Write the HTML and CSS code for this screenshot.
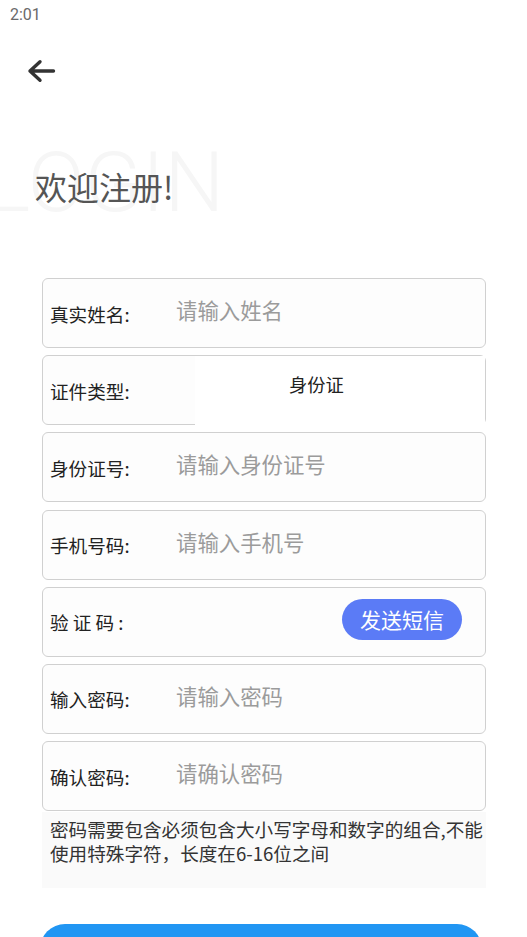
FILE: index.html
```html
<!DOCTYPE html>
<html>
<head>
    <title>注册</title>
    <meta charset="utf-8">
    <meta name="viewport" content="width=device-width, initial-scale=1">
    <link rel="stylesheet" href="styles.css">
</head>
<body>

<div class="status">2:01</div>

<div class="topbar">
    <svg class="back" width="30" height="26" viewBox="0 0 30 26">
        <path d="M3 13 H26.5 M13 3.7 L3 13 L13 22.3" fill="none" stroke="#333" stroke-width="3.4" stroke-linecap="round" stroke-linejoin="round"/>
    </svg>
</div>

<div class="hero">
    <div class="watermark">LOGIN</div>
    <div class="title">欢迎注册!</div>
</div>

<div class="form">
    <div class="field">
        <span class="label">真实姓名:</span>
        <input class="input" type="text" placeholder="请输入姓名">
    </div>

    <div class="field field-select">
        <span class="label">证件类型:</span>
        <div class="spinner">身份证</div>
    </div>

    <div class="field">
        <span class="label">身份证号:</span>
        <input class="input" type="text" placeholder="请输入身份证号">
    </div>

    <div class="field">
        <span class="label">手机号码:</span>
        <input class="input" type="text" placeholder="请输入手机号">
    </div>

    <div class="field">
        <span class="label">验 证 码 :</span>
        <a href="#" class="sms">发送短信</a>
    </div>

    <div class="field">
        <span class="label">输入密码:</span>
        <input class="input" type="password" placeholder="请输入密码">
    </div>

    <div class="field">
        <span class="label">确认密码:</span>
        <input class="input" type="password" placeholder="请确认密码">
    </div>
</div>

<div class="hint">密码需要包含必须包含大小写字母和数字的组合,不能<br>使用特殊字符，长度在6-16位之间</div>

<a href="#" class="submit">注册</a>

</body>
</html>
```

FILE: styles.css
```css
* {
  box-sizing: border-box;
}

body {
  margin: 0;
  padding: 0;
  background-color: #ffffff;
  font-family: "Noto Sans CJK SC", "Noto Sans", sans-serif;
  color: #222;
  overflow: hidden;
}

/* status bar */
.status {
  height: 30px;
  line-height: 30px;
  padding-left: 10px;
  font-family: Roboto, "Noto Sans", sans-serif;
  font-size: 16px;
  color: #6a6a6a;
}

.topbar {
  height: 54px;
  padding-top: 28px;
  padding-left: 27px;
}
.back {
  display: block;
}

/* big title with the faint LOGIN behind it */
.hero {
  position: relative;
  padding-top: 82px;
  padding-left: 35px;
}
.watermark {
  position: absolute;
  top: 57px;
  left: -14px;
  font-family: Roboto, sans-serif;
  font-weight: 300;
  font-size: 84px;
  line-height: 1;
  color: #f6f6f6;
  white-space: nowrap;
}
.title {
  position: relative;
  font-size: 32px;
  line-height: 41px;
  color: #555;
}

/* form rows */
.form {
  margin: 71px 41px 0 42px;
  display: flex;
  flex-direction: column;
  gap: 7.2px;
}
.field {
  height: 70px;
  display: flex;
  align-items: center;
  padding-left: 7px;
  background-color: #fdfdfd;
  border: 1px solid #d0d0d0;
  border-radius: 6px;
}
.label {
  width: 126px;
  flex-shrink: 0;
  font-size: 18.6px;
  color: #222;
  white-space: pre;
}
.input {
  flex: 1;
  min-width: 0;
  margin-bottom: 7px;
  padding: 0;
  border: none;
  outline: none;
  background: transparent;
  font-family: "Noto Sans CJK SC", sans-serif;
  font-size: 21.4px;
  color: #333;
}
.input::placeholder {
  color: #9b9b9b;
}

.field-select .label {
  width: 145px;
}
.spinner {
  flex: 1;
  align-self: stretch;
  margin-bottom: -1px;
  padding: 15px 0 0 94px;
  background-color: #ffffff;
  font-size: 18.3px;
  line-height: 26px;
  color: #222;
}

.sms {
  margin-left: auto;
  margin-right: 23px;
  margin-bottom: 5px;
  width: 120px;
  height: 41px;
  line-height: 41px;
  border-radius: 21px;
  background-color: #5b7bf6;
  color: #ffffff;
  font-size: 21px;
  text-align: center;
  text-decoration: none;
}

/* password rules */
.hint {
  margin: 1px 41px 0 42px;
  height: 76px;
  padding: 5px 0 0 8px;
  background-color: #fafafa;
  font-size: 18.6px;
  line-height: 23.5px;
  color: #333;
  white-space: nowrap;
}

.submit {
  display: block;
  margin: 36px 45px 0 40px;
  height: 50px;
  line-height: 50px;
  border-radius: 25px;
  background-color: #2196f3;
  color: #ffffff;
  font-size: 20px;
  text-align: center;
  text-decoration: none;
}
```
